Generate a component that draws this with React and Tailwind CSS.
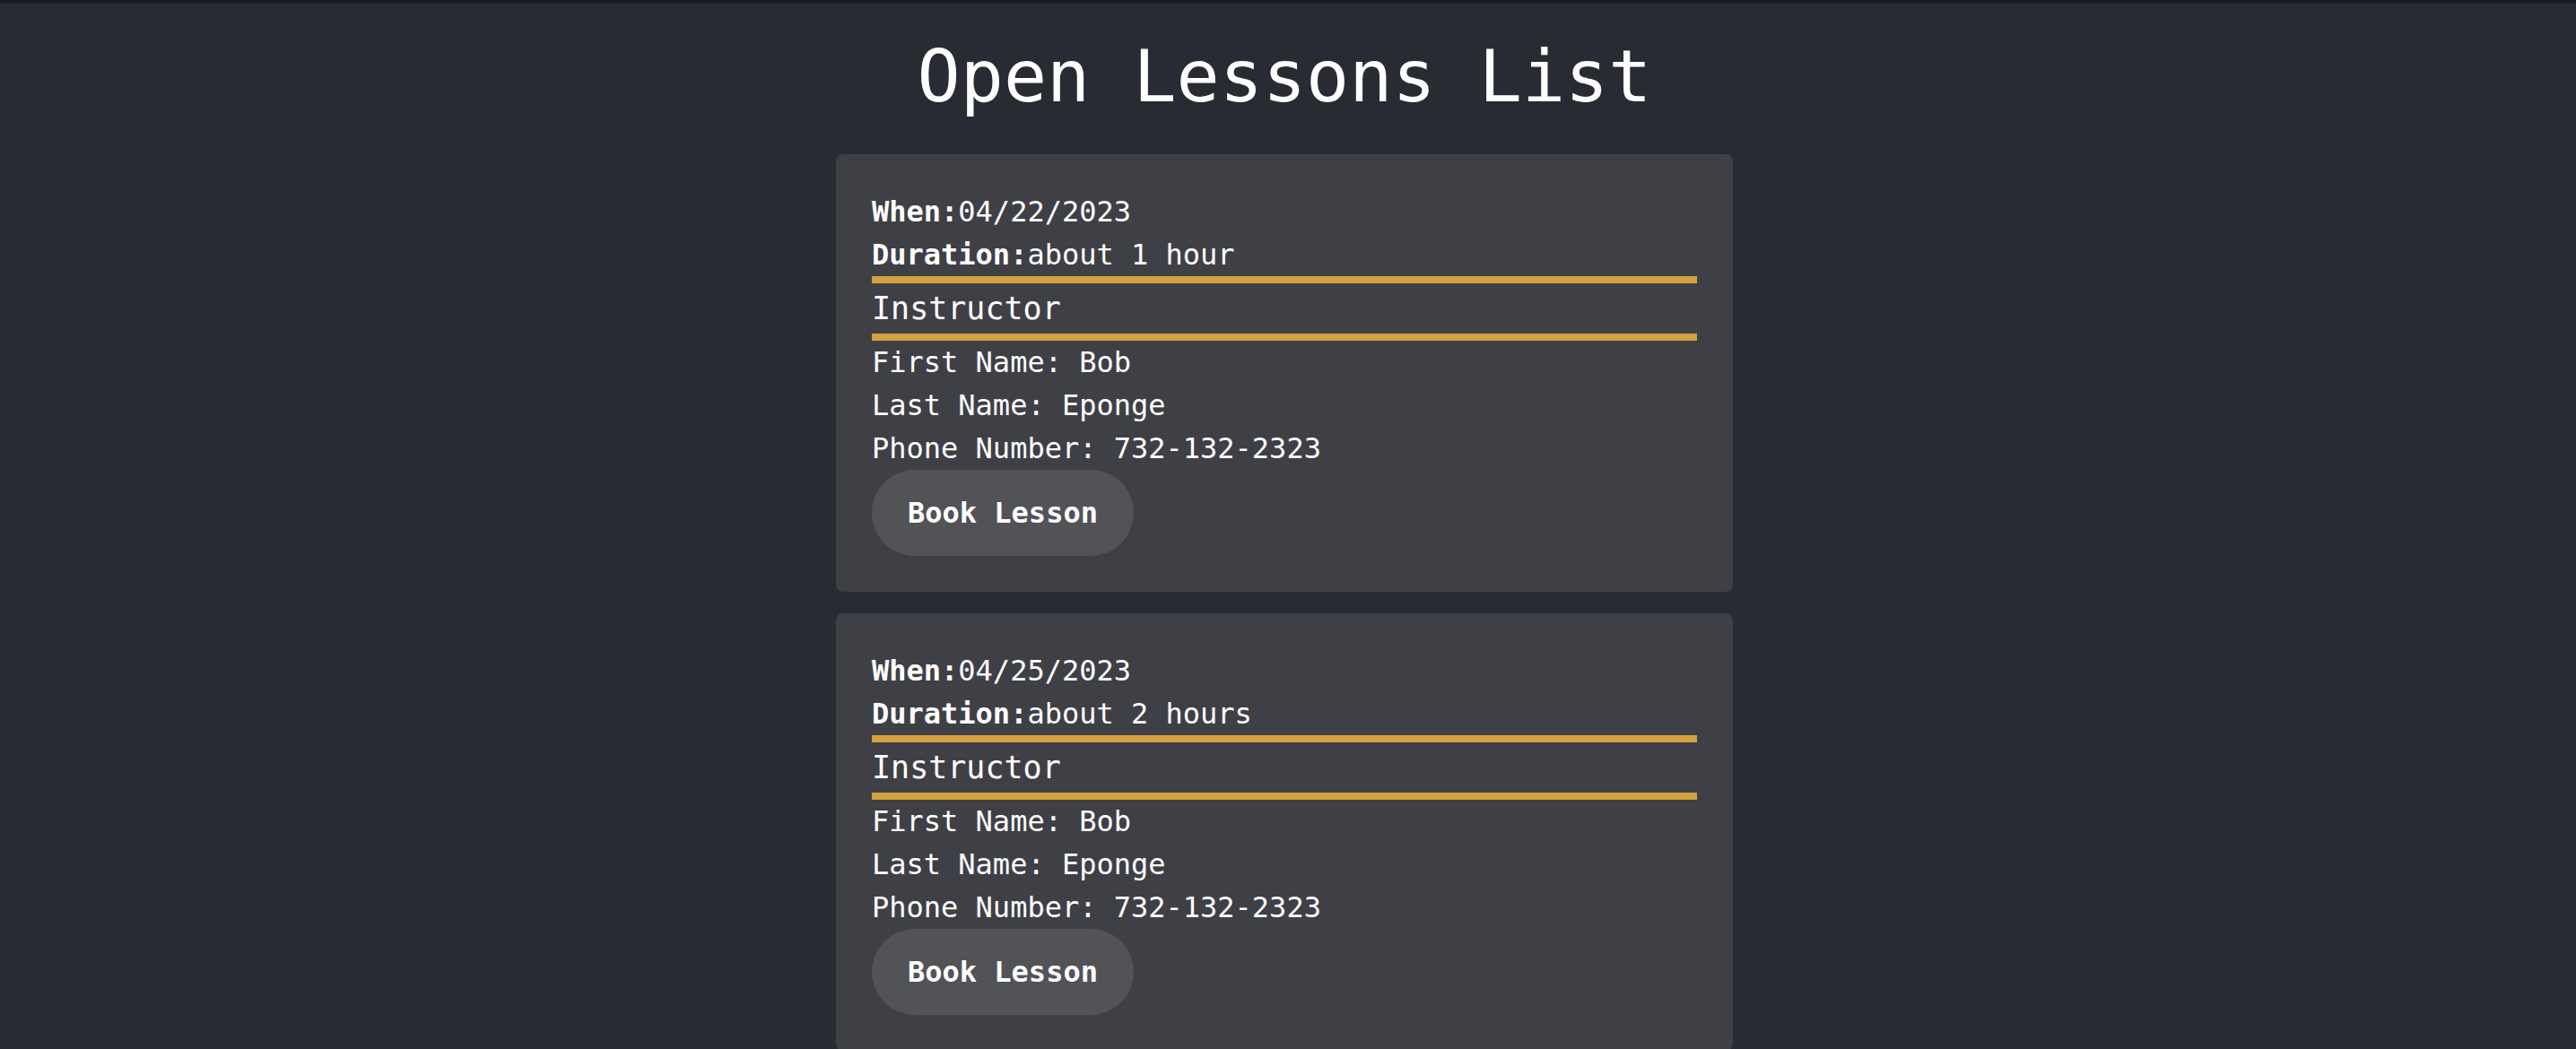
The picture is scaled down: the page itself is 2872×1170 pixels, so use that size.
import React from "react";

const lessons = [
  {
    id: 1,
    when: "04/22/2023",
    duration: "about 1 hour",
    instructor: { firstname: "Bob", lastname: "Eponge", phone: "732-132-2323" },
  },
  {
    id: 2,
    when: "04/25/2023",
    duration: "about 2 hours",
    instructor: { firstname: "Bob", lastname: "Eponge", phone: "732-132-2323" },
  },
];

const LessonCard = ({ lesson }) => {
  return (
    <div className="w-[1000px] bg-[#3f4046] rounded-lg p-10 text-white">
      <p className="leading-[48px]">
        <span className="font-bold">When:</span>
        {lesson.when}
      </p>
      <p className="leading-[48px]">
        <span className="font-bold">Duration:</span>
        {lesson.duration}
      </p>
      <div className="h-2 bg-[#d4a13f]" />
      <h3 className="text-[35px] leading-[56px]">Instructor</h3>
      <div className="h-2 bg-[#d4a13f]" />
      <p className="leading-[48px]">First Name: {lesson.instructor.firstname}</p>
      <p className="leading-[48px]">Last Name: {lesson.instructor.lastname}</p>
      <p className="leading-[48px]">Phone Number: {lesson.instructor.phone}</p>
      <button className="bg-[#525357] text-white font-bold rounded-full px-10 py-6 leading-[48px]">
        Book Lesson
      </button>
    </div>
  );
};

export default function App() {
  return (
    <div
      className="min-h-screen bg-[#292b33] text-[32px]"
      style={{ fontFamily: '"DejaVu Sans Mono", "Liberation Mono", monospace' }}
    >
      <div className="h-1 bg-[#1b1c20]" />

      {/* Title */}
      <h1 className="text-center text-white text-[80px] leading-[96px] pt-[34px] pb-[38px] pr-2">
        Open Lessons List
      </h1>

      {/* Lessons */}
      <div className="flex flex-col items-center gap-6 pr-2">
        {lessons.map((lesson) => (
          <LessonCard key={lesson.id} lesson={lesson} />
        ))}
      </div>
    </div>
  );
}
